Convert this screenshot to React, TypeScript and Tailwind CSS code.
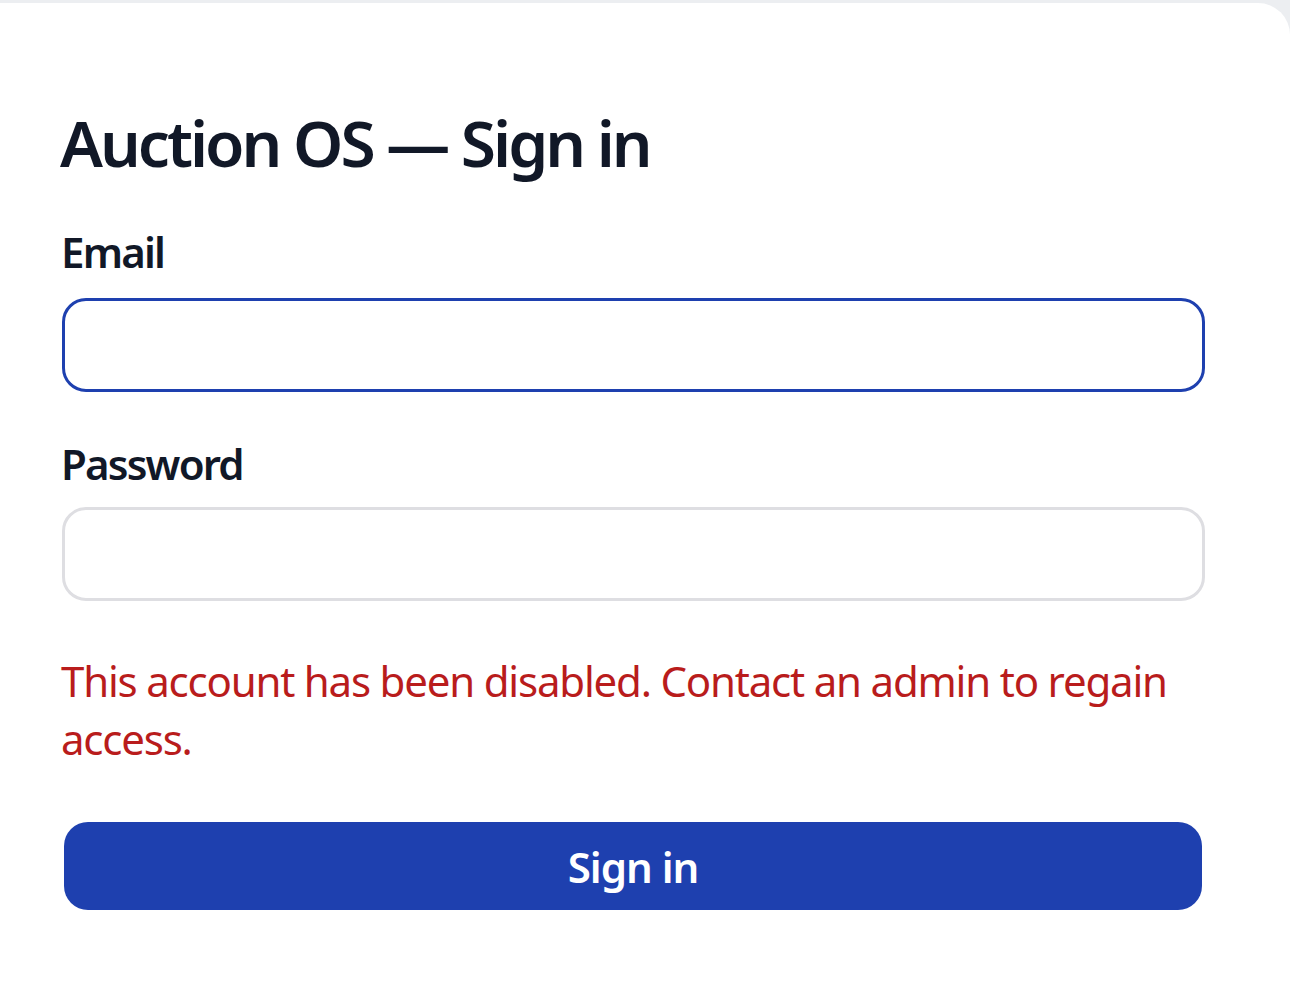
import { useState } from 'react';

export default function App() {
  const [email, setEmail] = useState('');
  const [password, setPassword] = useState('');

  return (
    <div className="min-h-screen bg-[#eceef1] pt-[3px] font-['Noto_Sans',sans-serif]">
      <div className="min-h-[999px] bg-white rounded-tr-[32px] pl-[62px] pr-[85px] pt-[102px]">
        <h1 className="-ml-[2px] text-[64px] leading-[76px] font-semibold text-[#111827] tracking-[-3px]">
          Auction OS — Sign in
        </h1>

        <form className="mt-[47px]" onSubmit={(e) => e.preventDefault()}>
          <label className="-ml-[1px] block text-[42px] leading-[48px] font-semibold text-[#111827] tracking-[-1.8px]">
            Email
          </label>
          <input
            type="email"
            value={email}
            onChange={(e) => setEmail(e.target.value)}
            className="mt-[22px] block w-full h-[94px] rounded-[24px] border-[3px] border-[#1e40af] px-6 text-[42px] outline-none"
          />

          <label className="-ml-[1px] mt-[48px] block text-[42px] leading-[48px] font-semibold text-[#111827] tracking-[-1.8px]">
            Password
          </label>
          <input
            type="password"
            value={password}
            onChange={(e) => setPassword(e.target.value)}
            className="mt-[19px] block w-full h-[94px] rounded-[24px] border-[3px] border-[#dedee2] px-6 text-[42px] outline-none"
          />

          <p className="-ml-[1px] mt-[51px] text-[42px] leading-[58px] text-[#b91c1c] tracking-[-1.2px]">
            This account has been disabled. Contact an admin to regain access.
          </p>

          <button
            type="submit"
            className="mt-[54px] ml-[2px] block w-[1138px] h-[88px] rounded-[24px] bg-[#1e40af] text-white text-[42px] font-semibold tracking-[-1px]"
          >
            Sign in
          </button>
        </form>
      </div>
    </div>
  );
}
